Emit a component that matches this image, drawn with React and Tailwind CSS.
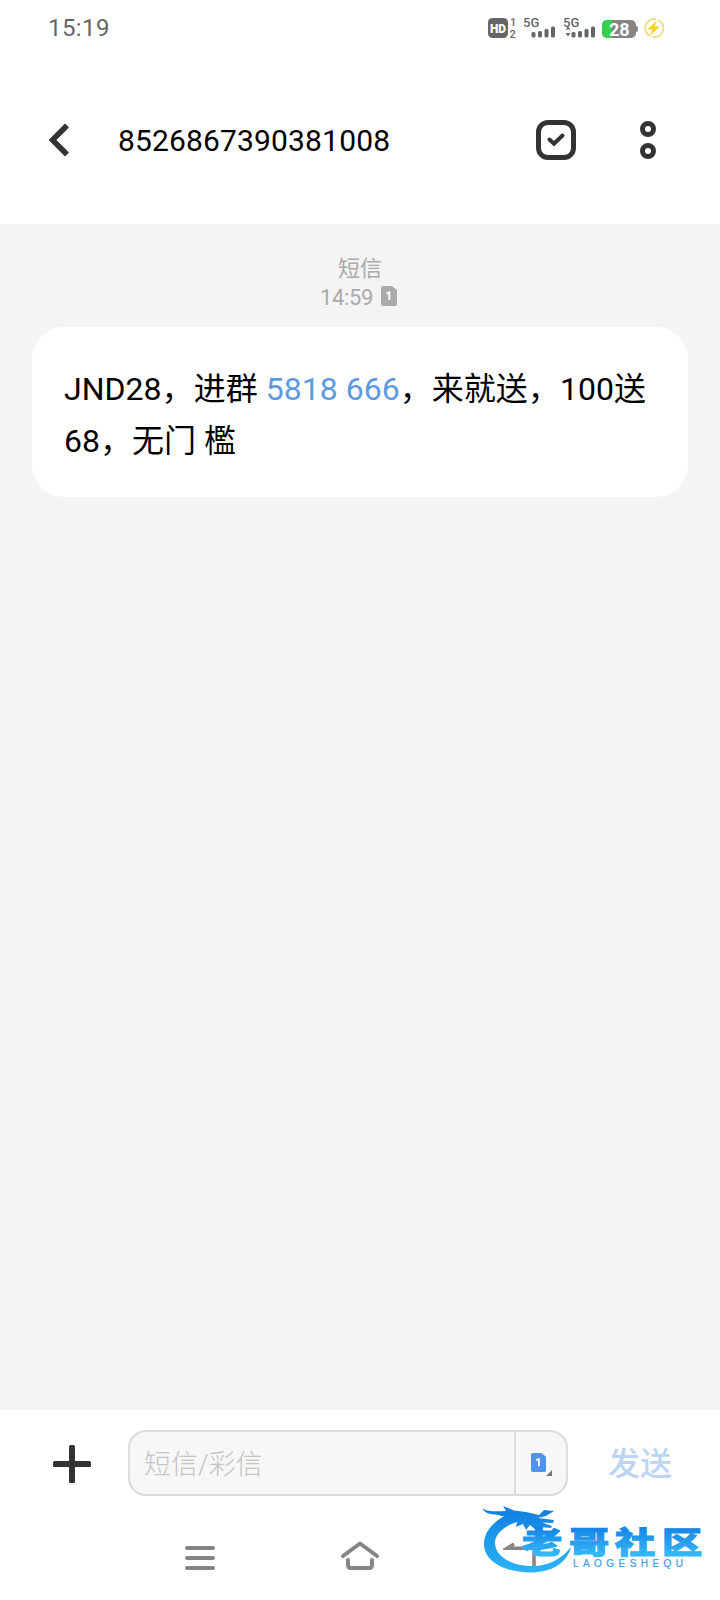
function SignalBars({ active }) {
  return (
    <svg width="34" height="24" viewBox="0 0 34 24" fill="#666">
      <text x="-1" y="11" fontSize="13" fontWeight="500" fontFamily="Roboto, sans-serif">
        5G
      </text>
      {active && <path d="M4 10.5 L6.5 13.5 H1.5 Z M1.5 17 H6.5 L4 20.5 Z" />}
      <rect x="7.5" y="16" width="4" height="5.5" rx="1.5" />
      <rect x="14" y="15" width="4" height="6.5" rx="1.5" />
      <rect x="20.5" y="13" width="4" height="8.5" rx="1.5" />
      <rect x="27" y="10.5" width="4" height="11" rx="1.5" />
    </svg>
  );
}

function StatusBar() {
  return (
    <div className="h-14 flex items-center justify-between pl-[48px] pr-[55px] text-[#666]">
      <span className="text-2xl leading-none tracking-[0.4px]">15:19</span>
      <div className="flex items-center">
        <svg width="30" height="24" viewBox="0 0 30 24">
          <rect x="0" y="2" width="20" height="20" rx="4.5" fill="#666" />
          <text x="2" y="16.5" fontSize="12.5" fontWeight="900" fontFamily="Roboto, sans-serif" fill="#fff" textLength="16" lengthAdjust="spacingAndGlyphs">
            HD
          </text>
          <text x="22" y="10" fontSize="11" fontWeight="500" fontFamily="Roboto, sans-serif" fill="#666">
            1
          </text>
          <text x="21.5" y="21.5" fontSize="11" fontWeight="500" fontFamily="Roboto, sans-serif" fill="#666">
            2
          </text>
        </svg>
        <div className="ml-[6px] flex gap-[6px]">
          <SignalBars />
          <SignalBars active />
        </div>
        <div className="ml-[4px] mr-px mt-[2px] flex items-center">
          <div className="relative w-[34px] h-[18px] rounded-[5px] bg-[#858585]">
            <div className="w-[10px] h-full rounded-l-[5px] bg-[#35cf4b]"></div>
            <span className="absolute -top-[2px] left-[7px] text-[18px] leading-[23px] font-bold text-white">28</span>
          </div>
          <div className="w-[2px] h-[6px] rounded-r bg-[#858585]"></div>
        </div>
        <svg className="ml-[4px]" width="22" height="22" viewBox="0 0 22 22">
          <path d="M13 2.2 A9 9 0 0 0 7 19 M9.5 20 A9 9 0 0 0 15.5 3.2" fill="none" stroke="#eedb83" strokeWidth="1.8" />
          <path d="M14.5 3 L4.5 12.5 H9.5 L6.5 19 L17 9.5 H11.5 Z" fill="#f7d518" />
        </svg>
      </div>
    </div>
  );
}

function Header() {
  return (
    <div className="h-[168px] flex items-start pt-[64px]">
      <svg className="ml-[48px] shrink-0" width="24" height="40" viewBox="0 0 24 40">
        <path d="M19 5.5 L4.5 20 L19 34.5" fill="none" stroke="#333" strokeWidth="5.5" />
      </svg>
      <h1 className="ml-[46px] flex-1 text-[30px] leading-[41px] tracking-[0.15px] text-black">8526867390381008</h1>
      <svg className="mr-[61px]" width="42" height="40" viewBox="0 0 42 40">
        <rect x="3.5" y="2.5" width="35" height="35" rx="9.5" fill="none" stroke="#333" strokeWidth="5" />
        <path d="M14.5 19.5 L19 23.8 L27.5 15.5" fill="none" stroke="#333" strokeWidth="4" strokeLinecap="round" />
      </svg>
      <svg className="mr-[62px]" width="20" height="40" viewBox="0 0 20 40" fill="none" stroke="#333" strokeWidth="5">
        <circle cx="10" cy="9" r="5.5" />
        <circle cx="10" cy="31" r="5.5" />
      </svg>
    </div>
  );
}

function SimIcon({ fill, size }) {
  return (
    <svg width={size * 0.8} height={size} viewBox="0 0 16 20">
      <path d="M2 0 H11 L16 4 V18 A2 2 0 0 1 14 20 H2 A2 2 0 0 1 0 18 V2 A2 2 0 0 1 2 0 Z" fill={fill} />
      <path d="M5.5 7.5 L8.3 6.5 V14" fill="none" stroke="#fff" strokeWidth="2" />
    </svg>
  );
}

function Conversation() {
  return (
    <div className="h-[1186px] bg-[#f4f4f4] px-8 pt-[30px]">
      <div className="flex flex-col items-center text-[22px] leading-[29px] text-[#aaa]">
        <span>短信</span>
        <div className="flex items-center pr-[3px]">
          <span className="mr-[8px] tracking-[-0.4px]">14:59</span>
          <span className="-mt-[3px]">
            <SimIcon fill="#aaa" size={20} />
          </span>
        </div>
      </div>
      <div className="mt-[15px] h-[170px] rounded-[32px] bg-white pl-8 pt-[36px] text-[32px] leading-[52px] tracking-[0.03px] text-black whitespace-nowrap">
        <p>
          JND28，进群 <span className="text-[#5c9ae0]">5818 666</span>，来就送，100送
        </p>
        <p>68，无门 檻</p>
      </div>
    </div>
  );
}

function Composer() {
  return (
    <div className="h-[106px] flex items-center">
      <svg className="ml-[53px] mt-[2px] shrink-0" width="38" height="38" viewBox="0 0 38 38" fill="#333">
        <rect x="16" y="0" width="6" height="38" rx="1.5" />
        <rect x="0" y="16" width="38" height="6" rx="1.5" />
      </svg>
      <div className="ml-[37px] w-[440px] h-[66px] flex rounded-[18px] border-2 border-[#dcdcdc] bg-[#f7f7f7]">
        <div className="flex-1 pl-[14px] pt-[2px] text-[27px] leading-[62px] font-light text-[#c4c4c4]">短信/彩信</div>
        <div className="w-[52px] border-l-2 border-[#dcdcdc] flex items-center pl-[15px]">
          <span className="-mt-[2px]">
            <SimIcon fill="#4f94e8" size={19} />
          </span>
          <svg className="mt-[20px]" width="6" height="6" viewBox="0 0 6 6">
            <path d="M6 0 V6 H0 Z" fill="#777" />
          </svg>
        </div>
      </div>
      <span className="ml-[40px] mt-[2px] text-[32px] leading-none font-medium text-[#bcd5f3]">发送</span>
    </div>
  );
}

function NavBar() {
  return (
    <div className="h-[84px] flex items-start pt-[24px]">
      <svg className="ml-[184px]" width="32" height="36" viewBox="0 0 32 36" stroke="#858585" strokeWidth="4" strokeLinecap="round">
        <path d="M3 8 H29 M3 18 H29 M3 28 H29" />
      </svg>
      <svg className="ml-[124px]" width="40" height="36" viewBox="0 0 40 36" fill="none" stroke="#858585" strokeWidth="4" strokeLinecap="round" strokeLinejoin="round">
        <path d="M3 16 L20 3.5 L37 16 M8 20 V25 Q8 28 11 28 H29 Q32 28 32 25 V20" />
      </svg>
      <svg className="ml-[123px]" width="36" height="36" viewBox="0 0 36 36" fill="none" stroke="#858585" strokeWidth="3.5">
        <path d="M11 4 L4 8.3 H31 V27" />
      </svg>
    </div>
  );
}

function Watermark() {
  return (
    <svg className="absolute left-[476px] top-[1500px]" width="236" height="80" viewBox="0 0 236 80">
      <defs>
        <linearGradient id="wm" gradientUnits="userSpaceOnUse" x1="0" y1="10" x2="0" y2="72">
          <stop offset="0" stopColor="#1180e2" />
          <stop offset="1" stopColor="#2cb4f7" />
        </linearGradient>
        <linearGradient id="wmText" gradientUnits="userSpaceOnUse" x1="0" y1="-26" x2="0" y2="2">
          <stop offset="0" stopColor="#1583e6" />
          <stop offset="1" stopColor="#35b8f7" />
        </linearGradient>
      </defs>
      <g fill="url(#wm)">
        {/* ring body */}
        <path d="M34 13 C17 21 8 32 8 44 C8 61 28 72.5 54 72.5 C76 72.5 91 63 95 47 C86 59 72 66 57 66 C35 66 19 56 19 43 C19 34 27 27 40 22 Z" />
        {/* dragon head */}
        <path d="M6 8.5 C13 12 20 11.5 30 11 L27 6 L38 10.5 L50 12 L63 15 L68 10 L78 11 L70 16 L62 18 L78 20 L77 23 L66 22.5 L76 26 L75 28 L64 27 L60 30 L54 25 L50 30 L47 24 L40 27 L41 22 L35 24 L25 24 L30 17 L20 14.5 C14 14.5 9 13 6 8.5 Z" />
      </g>
      <g fontFamily="'Noto Sans CJK SC', sans-serif" fontWeight="900" fontSize="30" fill="url(#wmText)" stroke="url(#wmText)" strokeWidth="1.1">
        <text transform="translate(46 53) scale(1.34 1)">老</text>
        <text transform="translate(93 53) scale(1.34 1)">哥</text>
        <text transform="translate(139 53) scale(1.34 1)">社</text>
        <text transform="translate(186 53) scale(1.34 1)">区</text>
      </g>
      <text x="97" y="66.5" fontFamily="'Liberation Sans', sans-serif" fontSize="10" fill="#3e9be5" stroke="#3e9be5" strokeWidth="0.2" textLength="110" lengthAdjust="spacing">
        LAOGESHEQU
      </text>
    </svg>
  );
}

export default function App() {
  return (
    <div className="relative w-[720px] h-[1600px] overflow-hidden bg-white font-[Roboto,'Noto_Sans_CJK_SC',sans-serif]">
      <StatusBar />
      <Header />
      <Conversation />
      <Composer />
      <NavBar />
      <Watermark />
    </div>
  );
}
